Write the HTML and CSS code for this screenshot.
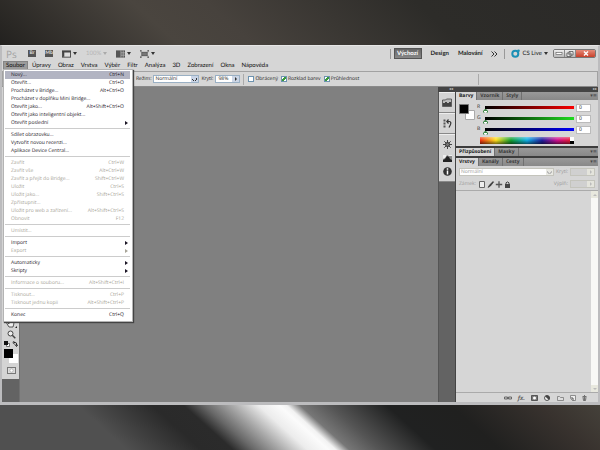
FILE: index.html
```html
<!DOCTYPE html>
<html lang="cs">
<head>
<meta charset="utf-8">
<title>Ps</title>
<link rel="stylesheet" href="styles.css">
</head>
<body>
<div class="wall wall-top"></div>
<main class="window">
  <header class="appbar">
    <span class="logo">Ps</span>
    <div class="launchers">
      <button class="sq">Br</button>
      <button class="sq">Mb</button>
      <button class="drop" aria-label="Zobrazit"><svg width="9" height="8" viewBox="0 0 10 8"><rect x=".5" y=".5" width="9" height="7" fill="#ddd" stroke="#444"/><path d="M0 1.500h10M1.800 1v6" stroke="#444" stroke-width="1.500"/></svg><i class="caret"></i></button>
      <button class="drop dim">100%<i class="caret"></i></button>
      <button class="drop" aria-label="Uspořádat"><svg width="9" height="8" viewBox="0 0 10 8"><rect width="10" height="8" fill="#555"/><path d="M5.500 0v8M5.500 2.700H10M5.500 5.300H10M8 0v8" stroke="#bbb" stroke-width=".8"/></svg><i class="caret"></i></button>
      <button class="drop" aria-label="Režim obrazovky"><svg width="9" height="8" viewBox="0 0 10 8"><rect x="2" y="2" width="6" height="4" fill="#777" stroke="#444" stroke-width=".7"/><path d="M0 2V0h2M8 0h2v2M10 6v2H8M2 8H0V6M0 0l2 2M10 0L8 2M0 8l2-2M10 8L8 6" fill="none" stroke="#555" stroke-width=".8"/></svg><i class="caret"></i></button>
    </div>
    <div class="spaces">
      <button class="active">Výchozí</button>
      <button>Design</button>
      <button>Malování</button>
      <button aria-label="Další"><svg width="7" height="6" viewBox="0 0 7 6"><path d="M.5.5L3 3 .5 5.500M3.500.5L6 3 3.500 5.500" fill="none" stroke="#333"/></svg></button>
    </div>
    <button class="cslive"><svg width="9" height="9" viewBox="0 0 9 9"><circle cx="4.300" cy="4.700" r="3" fill="none" stroke="#1b8fb5" stroke-width="2"/><circle cx="7.500" cy="1.700" r="1.300" fill="#1b8fb5"/></svg>CS Live<i class="caret"></i></button>
    <div class="winbtns">
      <button aria-label="Minimalizovat"><svg width="8" height="5" viewBox="0 0 8 5"><rect x="1" y="1.500" width="6" height="2" fill="#fff" stroke="#555" stroke-width=".6"/></svg></button>
      <button aria-label="Obnovit"><svg width="8" height="6" viewBox="0 0 8 6"><path d="M3 .5h4v3.500H3zM1 2h4v3.500H1z" fill="#eee" stroke="#444" stroke-width=".7"/></svg></button>
      <button class="close" aria-label="Zavřít"><svg width="6" height="5" viewBox="0 0 6 5"><path d="M1 .5l4 4M5 .5l-4 4" stroke="#fff" stroke-width="1.400"/></svg></button>
    </div>
  </header>

  <nav class="menubar">
    <div class="menuitem">
      <button class="open">Soubor</button>
      <div class="menu">
        <button class="hot"><span>Nový...</span><kbd>Ctrl+N</kbd></button>
        <button><span>Otevřít...</span><kbd>Ctrl+O</kbd></button>
        <button><span>Procházet v Bridge...</span><kbd>Alt+Ctrl+O</kbd></button>
        <button><span>Procházet v doplňku Mini Bridge...</span></button>
        <button><span>Otevřít jako...</span><kbd>Alt+Shift+Ctrl+O</kbd></button>
        <button><span>Otevřít jako inteligentní objekt...</span></button>
        <button class="sub"><span>Otevřít poslední</span></button>
        <hr>
        <button><span>Sdílet obrazovku...</span></button>
        <button><span>Vytvořit novou recenzi...</span></button>
        <button><span>Aplikace Device Central...</span></button>
        <hr>
        <button disabled><span>Zavřít</span><kbd>Ctrl+W</kbd></button>
        <button disabled><span>Zavřít vše</span><kbd>Alt+Ctrl+W</kbd></button>
        <button disabled><span>Zavřít a přejít do Bridge...</span><kbd>Shift+Ctrl+W</kbd></button>
        <button disabled><span>Uložit</span><kbd>Ctrl+S</kbd></button>
        <button disabled><span>Uložit jako...</span><kbd>Shift+Ctrl+S</kbd></button>
        <button disabled><span>Zpřístupnit...</span></button>
        <button disabled><span>Uložit pro web a zařízení...</span><kbd>Alt+Shift+Ctrl+S</kbd></button>
        <button disabled><span>Obnovit</span><kbd>F12</kbd></button>
        <hr>
        <button disabled><span>Umístit...</span></button>
        <hr>
        <button class="sub"><span>Import</span></button>
        <button class="sub" disabled><span>Export</span></button>
        <hr>
        <button class="sub"><span>Automaticky</span></button>
        <button class="sub"><span>Skripty</span></button>
        <hr>
        <button disabled><span>Informace o souboru...</span><kbd>Alt+Shift+Ctrl+I</kbd></button>
        <hr>
        <button disabled><span>Tisknout...</span><kbd>Ctrl+P</kbd></button>
        <button disabled><span>Tisknout jednu kopii</span><kbd>Alt+Shift+Ctrl+P</kbd></button>
        <hr>
        <button><span>Konec</span><kbd>Ctrl+Q</kbd></button>
      </div>
    </div>
    <button>Úpravy</button><button>Obraz</button><button>Vrstva</button><button>Výběr</button><button>Filtr</button><button>Analýza</button><button>3D</button><button>Zobrazení</button><button>Okna</button><button>Nápověda</button>
  </nav>

  <section class="options">
    <label for="mode">Režim:</label>
    <span class="combo mode"><select id="mode"><option>Normální</option></select></span>
    <label for="opacity">Krytí:</label>
    <span class="spin"><input id="opacity" value="98%"><button aria-label="Krytí"><i class="right"></i></button></span>
    <div class="checks">
      <label><input type="checkbox">Obrácený</label>
      <label><input type="checkbox" checked>Rozklad barev</label>
      <label><input type="checkbox" checked>Průhlednost</label>
    </div>
  </section>

  <div class="work">
    <aside class="tools">
      <div class="toolbox">
        <button aria-label="Ručička"><svg width="11" height="10" viewBox="0 0 11 10"><path d="M3 9L.8 5.500c-.3-.8.600-1 1.200-.3L3 6V2c0-.8 1-.8 1.100 0V1.200c0-.9 1.200-.9 1.200 0V2c.1-.9 1.200-.8 1.200.1v.7c.2-.8 1.300-.6 1.300.2V6L7 9z" fill="#eee" stroke="#333" stroke-width=".8"/><path d="M11 8v2H9z" fill="#222"/></svg></button>
        <button aria-label="Lupa"><svg width="9" height="9" viewBox="0 0 9 9"><circle cx="3.500" cy="3.500" r="2.500" fill="#eee" stroke="#444"/><path d="M5.300 5.300L8.300 8.300" stroke="#444" stroke-width="1.500"/></svg></button>
        <button aria-label="Barvy"><svg width="14" height="6" viewBox="0 0 14 6"><path d="M2.500 2.500h3v3h-3z" fill="#fff" stroke="#444" stroke-width=".7"/><path d="M0 0h4v4H0z" fill="#111"/><path d="M10 1.500h1.500Q12.500 1.500 12.500 3v1.500M10.500 0L8.800 1.500l1.700 1.500M11 3.500l1.500 2L14 3.500" fill="none" stroke="#222"/></svg></button>
        <svg class="pair" width="14" height="14" viewBox="0 0 14 14"><path d="M5 5h9v9H5z" fill="#fff"/><path d="M0 0h9v9H0z" fill="#000"/></svg>
        <button aria-label="Maska"><svg width="9" height="7" viewBox="0 0 9 7"><rect x=".5" y=".5" width="8" height="6" fill="#ddd" stroke="#777"/><circle cx="4.500" cy="3.500" r="1.700" fill="#fff" stroke="#999" stroke-width=".6"/></svg></button>
      </div>
    </aside>
    <div class="canvas"></div>
    <aside class="dock">
      <div class="grip"><span>◂◂</span><span>▸▸</span></div>
      <div class="cols">
        <div class="rail">
          <div class="railgroup"><button aria-label="Mini Bridge"><svg width="10" height="9" viewBox="0 0 10 9"><path d="M.5 2h3l1-1h5v7.500h-9z" fill="#bbb" stroke="#444" stroke-width=".8"/><path d="M1 8V5h2V4h2v1h2V4h2v4z" fill="#444"/></svg></button></div>
          <div class="railgroup"><button aria-label="Historie"><svg width="9" height="9" viewBox="0 0 9 9"><path d="M.5.5h2v2h-2zM.5 3.500h2v2h-2zM.5 6.500h2v2h-2z" fill="#555"/><path d="M4 2.500h2.500Q8.500 3 7.500 5.500L6 8.500M5.500.5L3.800 2.500l1.700 2" fill="none" stroke="#333" stroke-width="1.200"/></svg></button></div>
          <div class="railgroup tall">
            <button aria-label="Tvar"><svg width="9" height="9" viewBox="0 0 9 9"><path d="M4.500 0v9M0 4.500h9M1.300 1.300l6.400 6.400M7.700 1.300L1.300 7.700" stroke="#444"/><circle cx="4.500" cy="4.500" r="2" fill="#777" stroke="#333"/></svg></button>
            <button aria-label="Histogram"><svg width="9" height="7" viewBox="0 0 9 7"><rect width="9" height="7" fill="#888"/><path d="M0 7V5l2-1 2-3 2 1 1 2 2 1v2z" fill="#222"/><path d="M0 0h9v1L6 1 4 0 2 3 0 4z" fill="#eee"/></svg></button>
            <button aria-label="Informace"><svg width="9" height="9" viewBox="0 0 9 9"><circle cx="4.500" cy="4.500" r="4.300" fill="#333"/><path d="M4.500 1.300v1.400M4.500 3.600v4" stroke="#fff" stroke-width="1.500"/></svg></button>
          </div>
        </div>
        <div class="panels">
          <section class="panel">
            <div class="tabs"><button class="on">Barvy</button><button>Vzorník</button><button>Styly</button><span class="flyout">▾≡</span></div>
            <div class="colors">
              <svg width="16" height="16" viewBox="0 0 16 16"><path d="M6.500 6.500h9v9h-9z" fill="#fff" stroke="#aaa"/><path d="M.5.5h9v9h-9z" fill="#000" stroke="#777"/></svg>
              <div class="sliders">
                <label for="r">R</label><input id="r" class="red" type="range" value="0"><input class="num" aria-label="R" value="0">
                <label for="g">G</label><input id="g" class="green" type="range" value="0"><input class="num" aria-label="G" value="0">
                <label for="b">B</label><input id="b" class="blue" type="range" value="0"><input class="num" aria-label="B" value="0">
                <div class="spectrum"></div>
              </div>
            </div>
          </section>
          <section class="panel">
            <div class="tabs"><button class="on">Přizpůsobení</button><button>Masky</button><span class="flyout">▾≡</span></div>
          </section>
          <section class="panel layers">
            <div class="tabs"><button class="on">Vrstvy</button><button>Kanály</button><button>Cesty</button><span class="flyout">▾≡</span></div>
            <div class="row">
              <span class="combo off"><select aria-label="Režim prolnutí" disabled><option>Normální</option></select></span>
              <label for="lo">Krytí:</label><span class="spin off"><input id="lo" disabled><button disabled aria-label="Krytí"><i class="right"></i></button></span>
            </div>
            <div class="row">
              <span>Zámek:</span>
              <svg class="locks" width="32" height="7" viewBox="0 0 32 7"><path d="M.5.5h5v6h-5z" fill="#eee" stroke="#666"/><path d="M9 6.500L10.500 4 14 .5l.6.6L11.500 5z" fill="#333" stroke="#333" stroke-width=".6"/><path d="M20 .3v6.400M16.800 3.500h6.400" stroke="#555" stroke-width="1.300"/><path d="M26 3h5v4h-5z" fill="#444"/><path d="M27 3V1.800Q28.500 0 30 1.800V3" fill="none" stroke="#444"/></svg>
              <label for="lf" class="push">Výplň:</label><span class="spin off"><input id="lf" disabled><button disabled aria-label="Výplň"><i class="right"></i></button></span>
            </div>
            <div class="list"><div class="scroll"><b class="up"></b><b class="down"></b></div></div>
            <div class="foot">
              <svg width="8" height="6" viewBox="0 0 8 6"><path d="M.5 2h3v2h-3zM4.500 2h3v2h-3zM2.500 3h3" fill="none" stroke="#666"/></svg>
              <em>fx.</em>
              <svg width="7" height="6" viewBox="0 0 7 6"><path d="M.5.5h6v5h-6z" fill="#777" stroke="#555"/><circle cx="3.500" cy="3" r="1.500" fill="#fff"/></svg>
              <svg width="7" height="6" viewBox="0 0 7 6"><circle cx="3" cy="3" r="2.500" fill="#eee" stroke="#555"/><path d="M1 1.200A2.500 2.500 0 0 1 5 5z" fill="#444"/></svg>
              <svg width="7" height="6" viewBox="0 0 7 6"><path d="M.5 5.500v-4h2l1 1h3v3z" fill="#ddd" stroke="#777" stroke-width=".8"/></svg>
              <svg width="6" height="6" viewBox="0 0 6 6"><path d="M.5.5h5v5h-3l-2-2z" fill="#eee" stroke="#777" stroke-width=".8"/><path d="M1 3h2v2.500" fill="none" stroke="#555"/></svg>
              <svg width="5" height="6" viewBox="0 0 5 6"><path d="M.5 1.500h4M1 2l.5 3.500h2L4 2M2 .5h1M2.500 2v3" fill="none" stroke="#555" stroke-width=".8"/></svg>
            </div>
          </section>
        </div>
      </div>
    </aside>
  </div>
</main>
<div class="wall wall-bottom"></div>
</body>
</html>
```
FILE: styles.css
```css
* { box-sizing: border-box; }
body {
  margin: 0;
  min-height: 100vh;
  display: grid;
  grid-template-rows: 45px 1fr 45px;
  grid-template-columns: minmax(0, 1fr);
  font: 5px/8px "Open Sans", "Noto Sans", sans-serif;
  text-rendering: geometricPrecision;
  color: #222;
  background: #2b2a28;
}
button, input, select { font: inherit; color: inherit; text-rendering: inherit; margin: 0; padding: 0; border: 0; background: none; border-radius: 0; min-width: 0; }
svg { display: block; flex: none; }
button { white-space: nowrap; }

.wall-top { background: linear-gradient(42deg, #22211f 0, #292724 20px, #4a453f 120px, #47423d 170px, #2d2c29 310px, #2b2a28 100%); }
.wall-bottom { background: linear-gradient(42deg, #505050 0, #505050 85px, #2a2a2a 135px, #2b2b2b 156px, #686868 170px, #a8a8a8 188px, #ececec 206px, #fbfbfb 220px, #f2f2f2 225px, #777 234px, #555 254px, #202121 292px, #20201f 335px, #38322e 395px, #45413a 100%); }

.window {
  display: flex;
  flex-direction: column;
  background: #d6d6d6;
  border: solid #bcbcbe;
  border-width: 1px 2px 3px;
  border-top-color: #e6e6e6;
}

.appbar { display: flex; align-items: center; height: 15px; padding: 0 2px 0 4px; font-family: Lato, sans-serif; font-size: 6px; }
.logo { font: 10px/14px "Open Sans", sans-serif; color: #a2a2a2; width: 22px; }
.launchers { display: flex; align-items: center; gap: 9px; }
.sq { width: 8px; height: 7px; background: #555; color: #ddd; font-size: 5px; font-weight: 700; line-height: 7px; }
.drop { display: flex; align-items: center; gap: 2px; }
.dim { color: #b5b5b5; }
.caret { border: 2px solid transparent; border-top: 3px solid #333; border-bottom: 0; }
.dim .caret { border-top-color: #aaa; }
.right { display: block; border: 2px solid transparent; border-left: 2px solid #333; border-right: 0; }
.spaces { display: flex; align-items: center; gap: 9px; margin-left: auto; padding: 0 6px 0 3px; border: solid #999; border-width: 0 1px; height: 10px; font-weight: 700; color: #222; }
.spaces .active { background: linear-gradient(#666, #888); border: 1px solid #555; color: #fff; height: 11px; line-height: 8px; width: 28px; }
.cslive { display: flex; align-items: center; gap: 2px; margin: 0 5px 0 6px; }
.winbtns { display: flex; border: 1px solid #777; border-radius: 2px; overflow: hidden; }
.winbtns button { width: 11px; height: 7px; display: grid; place-items: center; background: linear-gradient(#eee, #b8b8b8); border-right: 1px solid #888; }
.winbtns .close { width: 19px; border: 0; background: linear-gradient(#e58a78, #c8402a); }

.menubar { display: flex; height: 10px; padding: 0 0 1px 1px; font-family: Lato, sans-serif; font-size: 6px; line-height: 8px; color: #111; }
.menubar > button { padding: 0 3px 0 4px; line-height: 8px; }
.menuitem { position: relative; }
.open { background: #9b9b9b; border: 1px solid #858585; padding: 0 2px; height: 9px; line-height: 7px; display: block; }
.menu {
  position: absolute;
  z-index: 5;
  top: 8px;
  left: 0;
  width: 130px;
  padding: 1px 2px 2px 1px;
  background: #fff;
  border: 1px solid #b4b4b4;
  box-shadow: 1px 1px 1px #444;
  font: 5px/8px "Open Sans", "Noto Sans", sans-serif;
  color: #1c1626;
}
.menu button { display: flex; justify-content: space-between; width: 100%; height: 8px; padding: 0 6px; align-items: center; }
.menu kbd { font: inherit; }
.menu .hot { background: #b2b4c2; }
.menu button:disabled { color: #a8a598; }
.menu .sub { padding-right: 2px; }
.menu .sub::after { content: ""; border: 2px solid transparent; border-left: 3px solid currentColor; border-right: 0; }
.menu hr { margin: 1px 0 2px; border: 0; height: 1px; background: #ccc; }

.options { display: flex; align-items: center; gap: 2px; height: 16px; padding-left: 133px; border: 1px solid #a2a2a2; border-bottom-color: #8a8a8a; }
.combo { display: flex; position: relative; height: 8px; background: #fff; border: 1px solid #9ab0c4; }
.combo::after { content: ""; width: 7px; margin-left: -7px; pointer-events: none; background: linear-gradient(45deg, transparent 33%, #333 33% 50%, transparent 50%) 1px 2px / 3px 3px no-repeat, linear-gradient(-45deg, transparent 33%, #333 33% 50%, transparent 50%) 3px 2px / 3px 3px no-repeat, #c9d4e6; }
.combo select { appearance: none; width: 100%; line-height: 6px; padding-left: 1px; }
.mode { width: 46px; }
.spin { display: flex; height: 8px; width: 25px; background: #fff; border: 1px solid #9ab0c4; }
.spin input { flex: 1; width: 10px; padding-left: 2px; line-height: 6px; }
.spin button { width: 7px; background: #ccd6e6; display: grid; place-items: center; }
.checks { display: flex; align-items: center; gap: 3px; height: 11px; margin-left: 1px; padding-left: 4px; border-left: 1px solid #aaa; width: 236px; border-right: 1px solid #aaa; }
.checks label { display: flex; align-items: center; gap: 1px; }
.checks input { appearance: none; width: 6px; height: 6px; background: #fff; border: 1px solid #6d93b0; }
.checks input:checked { background: linear-gradient(-45deg, transparent 35%, #3a9a3a 35% 65%, transparent 65%), linear-gradient(#3a9a3a, #3a9a3a) 0 2px / 2px 1px no-repeat, #fff; }

.work { flex: 1; display: flex; background: #808080; }
.tools { width: 18px; background: #636363; border-right: 1px solid #707070; }
.toolbox { height: 292px; background: #d4d4d4; display: flex; flex-direction: column; justify-content: flex-end; gap: 2px; padding: 0 1px 5px 2px; }
.toolbox button { display: grid; place-items: center; }
.toolbox .pair { margin-bottom: 2px; }
.canvas { flex: 1; }
.dock { width: 160px; display: flex; flex-direction: column; background: #636363; }
.grip { display: flex; height: 5px; background: #444; color: #ccc; font-size: 4px; line-height: 5px; padding: 0 1px 0 11px; justify-content: space-between; }
.cols { flex: 1; display: flex; }
.rail { width: 17px; border-left: 1px solid #555; }
.railgroup { height: 21px; background: #d4d4d4; border-bottom: 1px solid #888; display: grid; place-items: center; align-content: space-evenly; border-top: 1px solid #eee; }
.tall { height: 48px; }
.panels { flex: 1; display: flex; flex-direction: column; gap: 2px; background: #3c3c3c; border-left: 1px solid #444; }
.panel { background: #d6d6d6; }
.tabs { display: flex; height: 8px; background: linear-gradient(#999, #888); color: #3a3a3a; font-weight: 700; line-height: 8px; }
.tabs button { padding: 0 3px; border-right: 1px solid #707070; }
.tabs .on { background: #d6d6d6; color: #222; }
.flyout { margin-left: auto; padding-right: 1px; font-family: "DejaVu Sans", sans-serif; font-weight: 400; color: #444; }
.colors { display: flex; align-items: flex-start; height: 46px; padding: 4px 7px 0 3px; gap: 2px; }
.sliders { flex: 1; display: grid; grid-template-columns: 4px minmax(0, 1fr) 15px; column-gap: 2px; grid-auto-rows: 11px; }
.sliders label { line-height: 6px; }
.sliders input[type="range"] { appearance: none; width: 100%; height: 9px; display: block; }
.sliders input[type="range"]::-webkit-slider-runnable-track { height: 8px; background: linear-gradient(to right, #000, var(--hue)) 2px 1px / 100% 3px no-repeat; }
.sliders input[type="range"]::-webkit-slider-thumb { appearance: none; width: 5px; height: 4px; margin-top: 4px; background: radial-gradient(circle at 50% 70%, #fff 30%, #3f8a49 34%); clip-path: polygon(50% 0, 100% 60%, 100% 100%, 0 100%, 0 60%); }
.red { --hue: #f00; }
.green { --hue: #1fe01f; }
.blue { --hue: #00f; }
.sliders .num { height: 8px; width: 15px; background: #fff; border: 1px solid #bbb; padding-left: 2px; line-height: 6px; }
.spectrum { grid-column: 1 / 3; margin-left: 3px; height: 7px; background: linear-gradient(#000, #000) right bottom / 4px 3px no-repeat, linear-gradient(#fff, #fff) right top / 4px 4px no-repeat, linear-gradient(#fff6, transparent 45%, #0008), linear-gradient(to right, #f03010, #ffe020 17%, #12a030 33%, #10b0e8 50%, #2020a0 66%, #d01090 82%, #f02020); }
.layers { flex: 1; display: flex; flex-direction: column; }
.row { display: flex; align-items: center; gap: 2px; height: 12px; padding: 0 3px; color: #999; }
.row .combo { flex: 1; }
.off { border-color: #c4c4bc; }
.combo.off::after { background: linear-gradient(45deg, transparent 33%, #bbb 33% 50%, transparent 50%) 1px 2px / 3px 3px no-repeat, linear-gradient(-45deg, transparent 33%, #bbb 33% 50%, transparent 50%) 3px 2px / 3px 3px no-repeat, #e8e8e2; }
.off select { opacity: 1; }
.spin.off { background: #d0d0d0; }
.spin.off button { background: #e4e4dc; }
.off .right { border-left-color: #bbb; }
.locks { margin-left: 1px; }
.push { margin-left: auto; }
.list { flex: 1; display: flex; justify-content: flex-end; border: solid #aaa; border-width: 1px 0; }
.scroll { width: 7px; background: #f8f8f6; display: flex; flex-direction: column; justify-content: space-between; }
.scroll b { height: 7px; background: #e8e8de; display: grid; place-items: center; }
.scroll b::after { content: ""; border: 2px solid transparent; }
.scroll .up::after { border-bottom: 2px solid #bbb; border-top: 0; }
.scroll .down::after { border-top: 2px solid #bbb; border-bottom: 0; }
.foot { display: flex; justify-content: flex-end; align-items: center; gap: 6px; height: 9px; padding-right: 11px; }
.foot em { font-size: 6px; font-weight: 700; color: #666; }
```
